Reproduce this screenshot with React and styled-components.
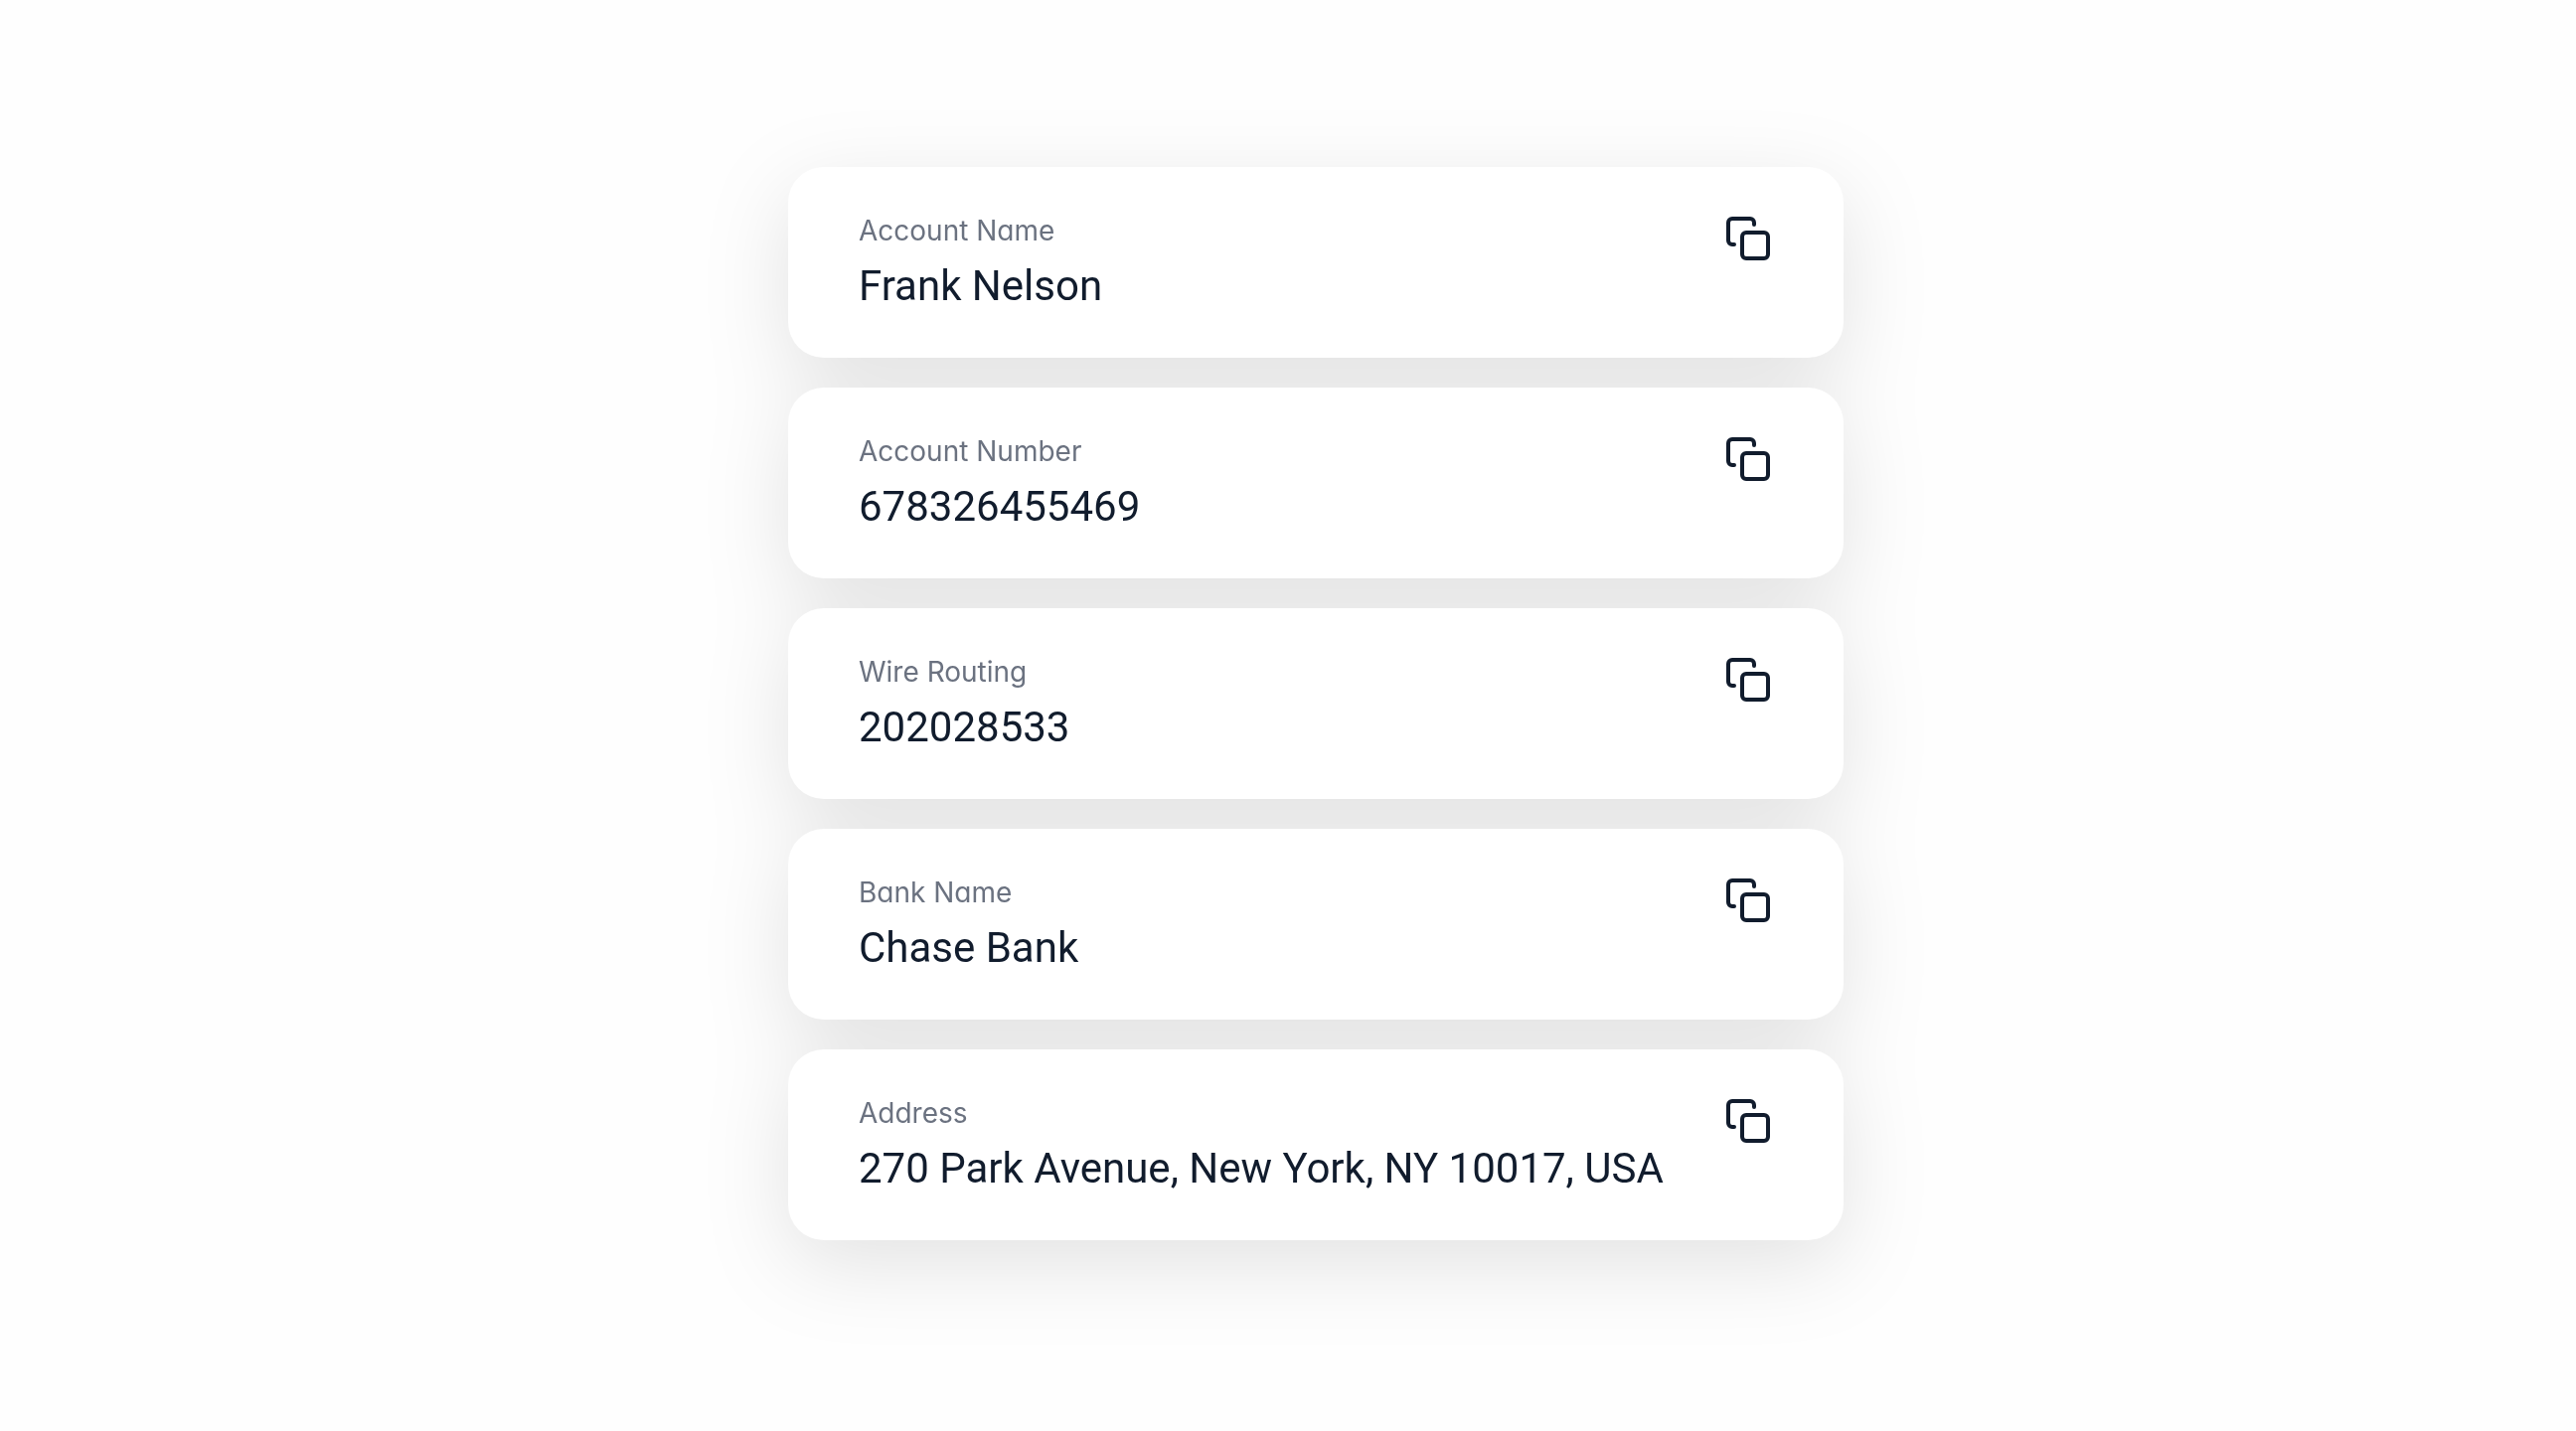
import React from "react";
import styled, { createGlobalStyle } from "styled-components";

const GlobalStyle = createGlobalStyle`
  *, *::before, *::after { box-sizing: border-box; }
  body {
    margin: 0;
    background: #fefefe;
    font-family: Inter, "Liberation Sans", sans-serif;
  }
`;

const Page = styled.main`
  min-height: 100vh;
  padding: 168px 24px 192px 80px;
  display: flex;
  justify-content: center;
  align-items: flex-start;
`;

const CardList = styled.dl`
  width: 100%;
  max-width: 1062px;
  margin: 0;
  display: flex;
  flex-direction: column;
  gap: 30px;
  filter: drop-shadow(0 24px 42px rgba(0, 0, 0, 0.11));
`;

const Card = styled.div`
  display: flex;
  justify-content: space-between;
  align-items: flex-start;
  gap: 24px;
  padding: 44px 72px 42px 71px;
  border-radius: 36px;
  background: #ffffff;
`;

const Details = styled.div`
  min-width: 0;
  display: flex;
  flex-direction: column;
  gap: 6px;
`;

const Label = styled.dt`
  color: #6b7280;
  font-size: 28px;
  line-height: 40px;
  font-feature-settings: "cv11";
`;

const Value = styled.dd`
  margin: 0;
  color: #111c2d;
  font-family: Roboto, "Liberation Sans", sans-serif;
  font-size: 42px;
  line-height: 60px;
`;

const CopyButton = styled.button`
  flex: none;
  margin-top: 4px;
  padding: 0;
  border: 0;
  background: none;
  color: #111c2d;
  cursor: pointer;

  svg {
    display: block;
    width: 48px;
    height: 48px;
  }
`;

const CopyIcon = () => (
  <svg
    viewBox="0 0 48 48"
    fill="none"
    stroke="currentColor"
    strokeWidth="4"
    strokeLinecap="round"
    strokeLinejoin="round"
    aria-hidden="true"
  >
    <path d="M10 30H8a4 4 0 0 1-4-4V8a4 4 0 0 1 4-4h18a4 4 0 0 1 4 4v2" />
    <rect x="18" y="18" width="26" height="26" rx="4" />
  </svg>
);

const details = [
  { label: "Account Name", value: "Frank Nelson" },
  { label: "Account Number", value: "678326455469" },
  { label: "Wire Routing", value: "202028533" },
  { label: "Bank Name", value: "Chase Bank" },
  { label: "Address", value: "270 Park Avenue, New York, NY 10017, USA" },
];

export default function App() {
  return (
    <>
      <GlobalStyle />
      <Page>
        <CardList>
          {details.map(({ label, value }) => (
            <Card key={label}>
              <Details>
                <Label>{label}</Label>
                <Value>{value}</Value>
              </Details>
              <CopyButton
                type="button"
                aria-label={`Copy ${label}`}
                onClick={() => navigator.clipboard?.writeText(value)}
              >
                <CopyIcon />
              </CopyButton>
            </Card>
          ))}
        </CardList>
      </Page>
    </>
  );
}
